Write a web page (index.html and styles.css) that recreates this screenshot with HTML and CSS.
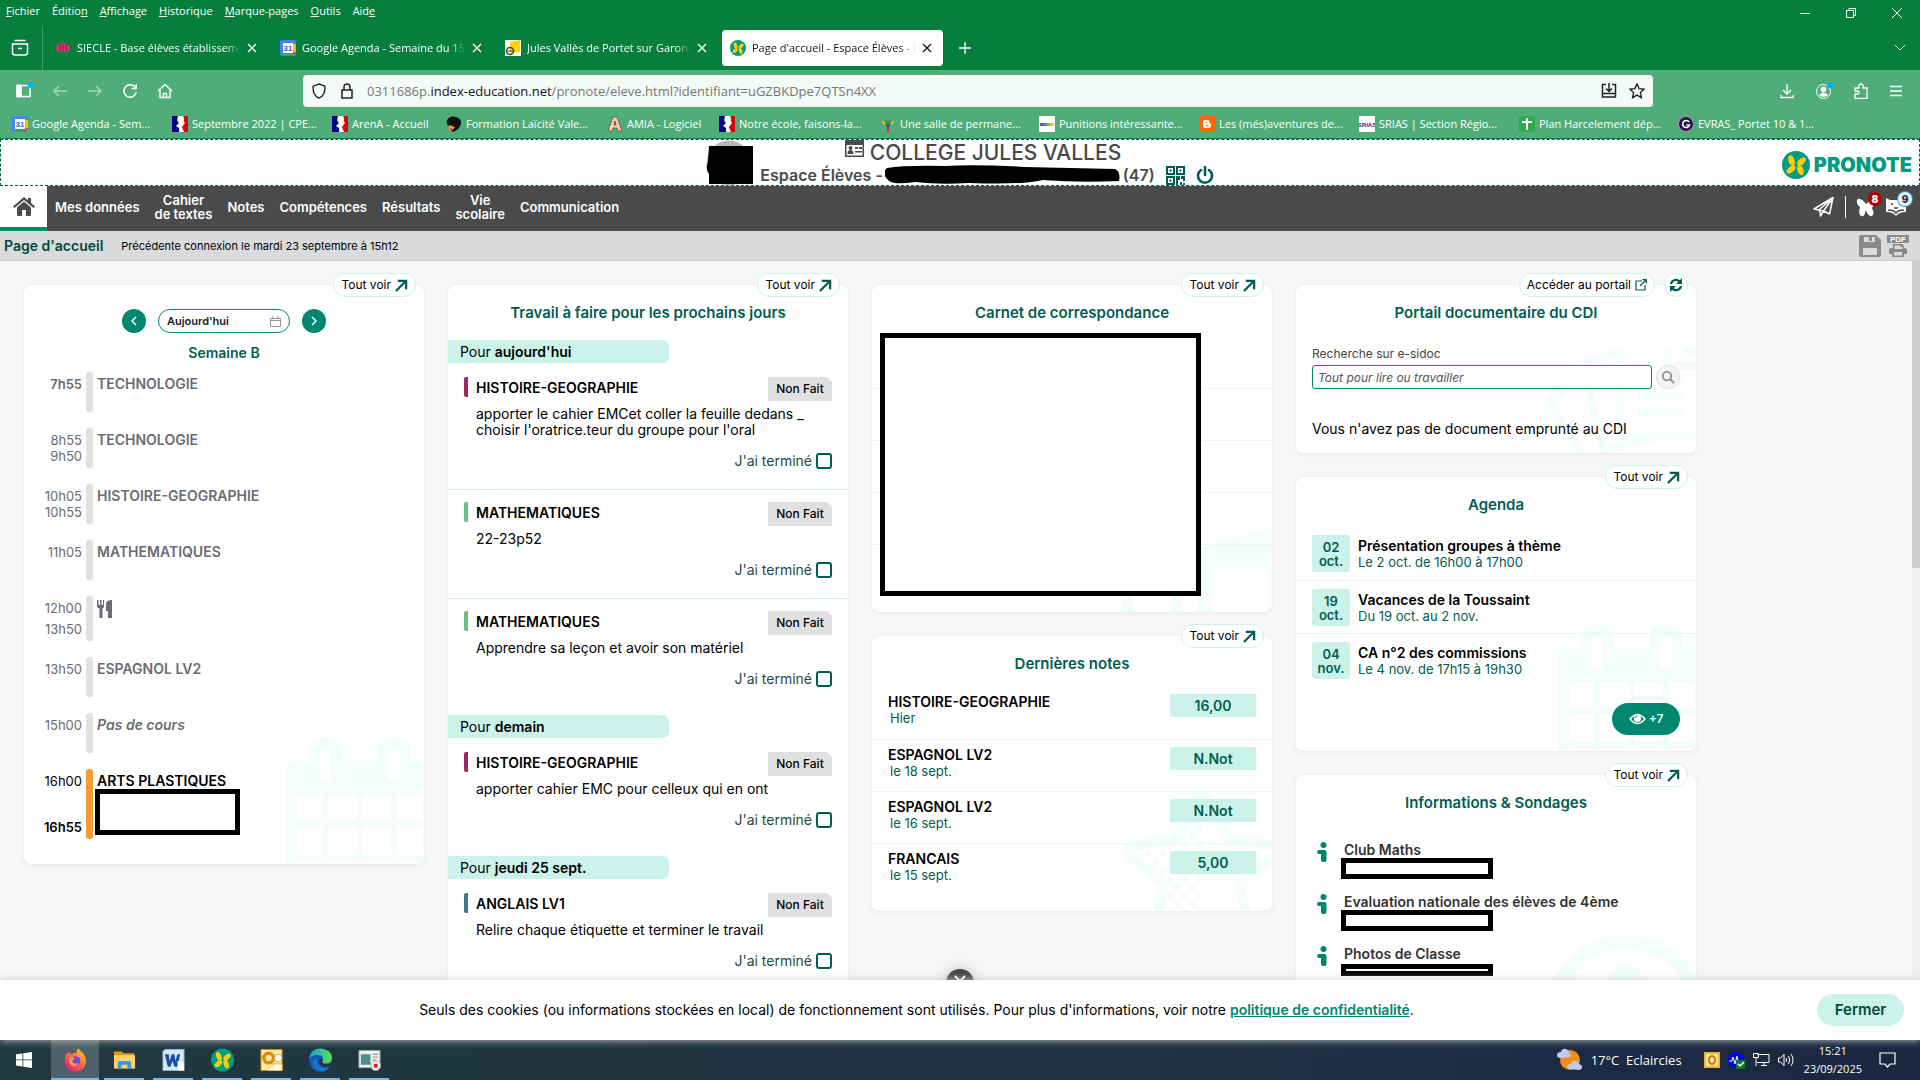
FILE: index.html
```html
<!DOCTYPE html>
<html lang="fr">
<head>
<meta charset="utf-8">
<title>Page d'accueil - Espace Élèves - PRONOTE</title>
<link rel="stylesheet" href="styles.css">
</head>
<body>
<svg class="defs" aria-hidden="true">
  <symbol id="butterfly" viewBox="0 0 28 28"><circle cx="14" cy="14" r="14" fill="#009b80"/><g fill="#ffcd05"><ellipse cx="9.500" cy="9.500" rx="3" ry="5.500" transform="rotate(-18 9.500 9.500)"/><ellipse cx="9" cy="18.500" rx="5.300" ry="3" transform="rotate(-38 9 18.500)"/><ellipse cx="19.500" cy="10.500" rx="5.300" ry="3" transform="rotate(-42 19.500 10.500)"/><ellipse cx="18.500" cy="19" rx="3" ry="5.500" transform="rotate(-18 18.500 19)"/><path d="M9.500 12l3.500 1.500-2.500 4zM18.500 16.500L15.500 15l2-3.500z"/></g></symbol>
  <symbol id="agenda-ico" viewBox="0 0 16 16"><rect width="16" height="16" rx="2" fill="#4285f4"/><path d="M12 4h4v8h-4z" fill="#fbbc04"/><path d="M4 12h8v4H4z" fill="#34a853"/><path d="M12 12h4l-4 4z" fill="#ea4335"/><rect x="3" y="3" width="10" height="10" fill="#fff"/><text x="8" y="11" font-size="8" font-weight="700" text-anchor="middle" fill="#3367d6" font-family="Liberation Sans">31</text></symbol>
  <symbol id="marianne" viewBox="0 0 16 16"><path d="M0 0h16v16H0z" fill="#fff"/><path d="M0 0h6C5 4 5 5 7 7L4 10l3 2v4H0z" fill="#000091"/><path d="M16 0h-5c2 3 0 5 2 7l-3 4 2 5h4z" fill="#e1000f"/></symbol>
  <symbol id="arrow" viewBox="0 0 14 14"><path d="M1 13L11.500 2.500M3 2h9v9" fill="none" stroke="#005e50" stroke-width="2.400"/></symbol>
  <symbol id="cross" viewBox="0 0 10 10"><path d="M1 1l8 8M9 1l-8 8" fill="none" stroke="currentColor" stroke-width="1.300"/></symbol>
  <symbol id="info" viewBox="0 0 10 20"><circle cx="6.500" cy="3" r="3"/><path d="M2 8h5.500q2 0 2 2v8q0 2-2.500 2h-1q-2 0-2-2v-6H2q-2 0-2-2t2-2z"/></symbol>
  <symbol id="calendar-mark" viewBox="0 0 138 126"><path fill="#f3fdfa" fill-rule="evenodd" d="M0 31q0-8 8-8h14V17q0-17 17-17t17 17v6h35V17q0-17 17-17t17 17v6h13v103H0zM34 16v24q0 3 3 3h5q3 0 3-3V16q0-4-3-4h-5q-3 0-3 4zM102 16v24q0 3 3 3h6q3 0 3-3V16q0-4-3-4h-6q-3 0-3 4zM11 57h25v25H11zM42 57h29v25H42zM76 57h29v25H76zM111 57h26v25h-26zM11 89h25v28H11zM42 89h29v28H42zM76 89h29v28H76zM111 89h26v28h-26zM11 123h25v3H11zM42 123h29v3H42zM76 123h29v3H76zM111 123h26v3h-26z"/></symbol>
</svg>

<header class="browser">
  <div class="menubar">
    <nav class="menus" aria-label="Menu du navigateur">
      <a href="#"><u>F</u>ichier</a><a href="#">Éditio<u>n</u></a><a href="#"><u>A</u>ffichage</a><a href="#"><u>H</u>istorique</a><a href="#"><u>M</u>arque-pages</a><a href="#"><u>O</u>utils</a><a href="#">Aid<u>e</u></a>
    </nav>
    <div class="window-controls">
      <button aria-label="Réduire"><svg width="12" height="12" viewBox="0 0 12 12"><path d="M1 6.500h10"/></svg></button>
      <button aria-label="Restaurer"><svg width="12" height="12" viewBox="0 0 12 12"><path d="M1.500 3.500h7v7h-7zM4 3V1.500h6.500v7H9"/></svg></button>
      <button aria-label="Fermer la fenêtre"><svg width="12" height="12" viewBox="0 0 12 12"><path d="M1 1l10 10M11 1L1 11"/></svg></button>
    </div>
  </div>
  <div class="tabs">
    <button class="tab-list" aria-label="Vue d'ensemble"><svg width="18" height="18" viewBox="0 0 18 18"><path d="M3.500 1.500h11M1.500 5h15v8.500q0 2.500-2.500 2.500H4q-2.500 0-2.500-2.500zM7 9.500h4" stroke-width="1.500"/></svg></button>
    <div class="tab"><svg class="fav" viewBox="0 0 16 16"><path d="M2 5q2-2 3 0 1-3 3-2 2-1 3 2 2-2 3 0 2 4-1 8l-2-3-1 3-2-3-2 3-1-3-2 3Q0 9 2 5z" fill="#d8366a"/><path d="M5 5v5M8 4v6M11 5v5" stroke="#7a1a3c" fill="none"/></svg><a href="#">SIECLE - Base élèves établissements</a><button aria-label="Fermer l'onglet"><svg width="10" height="10"><use href="#cross"/></svg></button></div>
    <div class="tab"><svg class="fav"><use href="#agenda-ico"/></svg><a href="#">Google Agenda - Semaine du 15 sept.</a><button aria-label="Fermer l'onglet"><svg width="10" height="10"><use href="#cross"/></svg></button></div>
    <div class="tab"><svg class="fav" viewBox="0 0 16 16"><path d="M0 0h16v16H0z" fill="#fff"/><path d="M5 2l10-2v12L5 13z" fill="#ffd400"/><circle cx="5" cy="11" r="3.500" fill="none" stroke="#3a4a4a" stroke-width="1.500"/><path d="M2 11h6" stroke="#3a4a4a"/></svg><a href="#">Jules Vallès de Portet sur Garonne</a><button aria-label="Fermer l'onglet"><svg width="10" height="10"><use href="#cross"/></svg></button></div>
    <div class="tab active"><svg class="fav"><use href="#butterfly"/></svg><a href="#">Page d'accueil - Espace Élèves - PRONOTE</a><button aria-label="Fermer l'onglet"><svg width="10" height="10"><use href="#cross"/></svg></button></div>
    <button class="new-tab" aria-label="Nouvel onglet"><svg width="12" height="12" viewBox="0 0 12 12"><path d="M6 0v12M0 6h12" stroke-width="1.300"/></svg></button>
    <button class="all-tabs" aria-label="Lister les onglets"><svg width="12" height="12" viewBox="0 0 12 12"><path d="M1 3l5 5 5-5"/></svg></button>
  </div>
  <div class="toolbar">
    <div class="tools left">
      <button aria-label="Panneau latéral"><svg width="18" height="18" viewBox="0 0 18 18"><path d="M2 3.500h13v11H2zM6 3.500v11" stroke-width="1.500"/><path d="M2 3h4v12H2z" fill="#fff"/><circle cx="15.500" cy="3" r="3" fill="#00b3f4" stroke="none"/></svg></button>
      <button class="dim" aria-label="Page précédente"><svg width="16" height="16" viewBox="0 0 16 16"><path d="M15 8H2M7 3L2 8l5 5" stroke-width="1.400"/></svg></button>
      <button class="dim" aria-label="Page suivante"><svg width="16" height="16" viewBox="0 0 16 16"><path d="M1 8h13M9 3l5 5-5 5" stroke-width="1.400"/></svg></button>
      <button aria-label="Actualiser"><svg width="16" height="16" viewBox="0 0 16 16"><path d="M13.500 5A6.200 6.200 0 1 0 14.200 9M14.200 1v4.500H9.700" stroke-width="1.500"/></svg></button>
      <button aria-label="Accueil"><svg width="16" height="16" viewBox="0 0 16 16"><path d="M1 8l7-6.500L15 8M3 7v7.500h10V7M6.500 14.500v-4h3v4" stroke-width="1.400"/></svg></button>
    </div>
    <div class="urlbar">
      <svg width="16" height="16" viewBox="0 0 16 16"><path d="M8 1l6 2.200c0 6-1 9.500-6 12C3 12.700 2 9.200 2 3.200z" stroke-width="1.400"/></svg>
      <svg width="16" height="16" viewBox="0 0 16 16"><path d="M3 7h10v8H3zM5 7V4q0-3 3-3t3 3v3" stroke-width="1.500"/></svg>
      <p class="url">0311686p.<b>index-education.net</b>/pronote/eleve.html?identifiant=uGZBKDpe7QTSn4XX</p>
      <button aria-label="Installer"><svg width="16" height="16" viewBox="0 0 16 16"><path d="M5 1.500H1.500v9h13v-9H11M1.500 10v4h13v-4M8 0v8M5 5.500L8 8.500l3-3" stroke-width="1.500"/></svg></button>
      <button aria-label="Marquer cette page"><svg width="16" height="16" viewBox="0 0 16 16"><path d="M8 1l2.100 4.600 5 .6-3.700 3.400 1 5L8 12.100l-4.400 2.500 1-5L.9 6.200l5-.6z" stroke-width="1.400"/></svg></button>
    </div>
    <div class="tools right">
      <button aria-label="Téléchargements"><svg width="16" height="16" viewBox="0 0 16 16"><path d="M8 1v10M4 7l4 4 4-4M2 12v2.500h12V12" stroke-width="1.300"/></svg></button>
      <button aria-label="Compte"><svg width="18" height="18" viewBox="0 0 18 18"><circle cx="8.500" cy="9.500" r="7"/><circle cx="8.500" cy="7.500" r="2.500" fill="#fff"/><path d="M4.500 13q4-4 8 0-4 3-8 0z" fill="#fff"/><circle cx="15" cy="3" r="3" fill="#00b3f4" stroke="none"/></svg></button>
      <button aria-label="Extensions"><svg width="16" height="16" viewBox="0 0 16 16"><path d="M2 15.300V11h2.500q1.500 0 1.500-1.500T4.500 8H2V5h4V3q0-2 2-2t2 2v2h4v10.300z" stroke-width="1.300"/></svg></button>
      <button aria-label="Menu"><svg width="14" height="14" viewBox="0 0 14 14"><path d="M1 2.500h12M1 7h12M1 11.500h12" stroke-width="1.300"/></svg></button>
    </div>
  </div>
  <nav class="bookmarks" aria-label="Marque-pages">
    <a href="#"><svg><use href="#agenda-ico"/></svg>Google Agenda - Sem...</a>
    <a href="#"><svg><use href="#marianne"/></svg>Septembre 2022 | CPE...</a>
    <a href="#"><svg><use href="#marianne"/></svg>ArenA - Accueil</a>
    <a href="#"><svg viewBox="0 0 16 16"><path d="M1 4q3-5 9-3 6 2 5 7-2 6-8 8-3-1-3-5-4-2-3-7z" fill="#111"/><path d="M3 9l6 2-4 5q-3-2-2-7z" fill="#f2a23c"/><path d="M4 12l3 1-2 3z" fill="#d6246b"/></svg>Formation Laïcité Vale...</a>
    <a href="#"><svg viewBox="0 0 16 16"><path d="M1 15L6 1h4l5 14h-4l-1-3H6l-1 3zM7 9h2L8 5z" fill="#f9cdb4" stroke="#6b4a3a" stroke-width=".8"/></svg>AMIA - Logiciel</a>
    <a href="#"><svg><use href="#marianne"/></svg>Notre école, faisons-la...</a>
    <a href="#"><svg viewBox="0 0 16 16"><path d="M4 6l4 8 4-8z" fill="#6a3fa0"/><path d="M1 5l5 1-1 4zM15 5l-5 1 1 4z" fill="#e8b920"/><path d="M5 3l3 3 3-3-1 6H6z" fill="#2f8f3a"/><path d="M7 12h2v4H7z" fill="#d23"/></svg>Une salle de permane...</a>
    <a href="#"><svg viewBox="0 0 16 16"><path d="M0 0h16v16H0z" fill="#fff"/><path d="M1 7h4v3H1z" fill="#7a4fa8"/><path d="M5 7h3v3H5z" fill="#3a8fd0"/><path d="M8 7h3v3H8z" fill="#8cc63e"/><path d="M11 7h4v3h-4z" fill="#f3c22b"/></svg>Punitions intéressante...</a>
    <a href="#"><svg viewBox="0 0 16 16"><rect width="16" height="16" rx="3" fill="#ff6600"/><path d="M5.500 4h3q2 0 2 2t1.500 2v1.500q0 2.500-2.500 2.500h-3Q4 12 4 9.500v-4Q4 4 5.500 4z" fill="#fff"/><path d="M6.500 6.500H8M6.500 9.500h3" stroke="#ff6600"/></svg>Les (més)aventures de...</a>
    <a href="#"><svg viewBox="0 0 16 16"><path d="M0 0h16v16H0z" fill="#fff"/><text x="8" y="11" font-size="6" font-weight="700" text-anchor="middle" fill="#1c2a78" font-family="Liberation Sans">SRIAS</text></svg>SRIAS | Section Régio...</a>
    <a href="#"><svg viewBox="0 0 16 16"><rect width="16" height="16" rx="2" fill="#2fa84f"/><path d="M8 2v12M3 6h10" stroke="#fff" stroke-width="2"/></svg>Plan Harcelement dép...</a>
    <a href="#"><svg viewBox="0 0 16 16"><circle cx="8" cy="8" r="7.500" fill="#1d1b44" stroke="#d77ec0"/><path d="M11 6a3.500 3.500 0 1 0 .5 3H8.500" fill="none" stroke="#fff" stroke-width="1.600"/></svg>EVRAS_ Portet 10 &amp; 1...</a>
  </nav>
</header>

<section class="banner">
  <div class="identity">
    <svg class="photo" width="48" height="46" viewBox="0 0 48 46"><circle cx="23" cy="23" r="22.500" fill="#b5b5c0"/><path d="M3 6h44v38H3V34Q-1 29 2 22z"/></svg>
    <div class="identity-text">
      <h1><svg width="19" height="17" viewBox="0 0 19 17"><path d="M0 0h19v17H0z" fill="#4a4a4a"/><path d="M1.500 5h16v10.500h-16z" fill="#fff"/><circle cx="5.500" cy="8" r="2" fill="#4a4a4a"/><path d="M2.500 14q0-4 3-4t3 4zM10 7h3v2h-3zM14 7h3v2h-3zM10 11h7v1.500h-7z" fill="#4a4a4a"/></svg>COLLEGE JULES VALLES</h1>
      <p>Espace Élèves -<svg width="236" height="20" viewBox="0 0 236 20"><path d="M2 3Q20 0 60 1q30-2 80 1l90 2q6 3 4 12-40 2-76-1-20 5-74 3-30 2-54-1-20 3-26-1-8-7-2-13z"/></svg>(47)
        <button aria-label="QR code"><svg width="19" height="19" viewBox="0 0 19 19"><path d="M1 1h7v7H1zM11 1h7v7h-7zM1 11h7v7H1z" fill="none" stroke="#005e50" stroke-width="2"/><path d="M3.500 3.500h2v2h-2zM13.500 3.500h2v2h-2zM3.500 13.500h2v2h-2zM10 10h4v4h-2v5h-2zM15 10h4v5h-2v-2h-2zM14 16h2v3h-2zM17 17h2v2h-2z" fill="#005e50"/></svg></button>
        <button aria-label="Se déconnecter"><svg width="18" height="19" viewBox="0 0 18 19"><path d="M5 4a7 7 0 1 0 8 0M9 1v8" fill="none" stroke="#005e50" stroke-width="2.600" stroke-linecap="round"/></svg></button>
      </p>
    </div>
  </div>
  <a class="brand" href="#"><svg width="28" height="28"><use href="#butterfly"/></svg>PRONOTE</a>
</section>

<nav class="mainnav" aria-label="Navigation principale">
  <a class="home" href="#" aria-label="Accueil"><svg width="22" height="19" viewBox="0 0 22 19"><path d="M11 0L0 9.500 1.500 11 11 3l9.500 8L22 9.500l-4-3.400V1h-3v2.500z"/><path d="M11 4.500L4 10.500V18q0 1 1 1h4v-6h4v6h4q1 0 1-1v-7.500z"/></svg></a>
  <a href="#">Mes données</a><a href="#">Cahier<br>de textes</a><a href="#">Notes</a><a href="#">Compétences</a><a href="#">Résultats</a><a href="#">Vie<br>scolaire</a><a href="#">Communication</a>
  <div class="nav-tools">
    <button aria-label="Envoyer"><svg width="22" height="22" viewBox="0 0 22 22"><path d="M1 13L20 1.500 16.500 18l-6-3-3 5-1-6.500L20 1.500 10.500 15z" fill="none" stroke="#fff" stroke-width="1.500" stroke-linejoin="round"/></svg></button>
    <i class="divider"></i>
    <button aria-label="8 notifications"><svg width="20" height="22" viewBox="0 0 20 22"><path d="M10 8C7 4 3 1 1 4q-1 4 3 7-2 7 1 9 3 1 4-3l1-3 1 3q2 4 5 3 3-2 0-8 3-4 2-7-4-2-8 3z" fill="#fff"/></svg><b class="count alert">8</b></button>
    <button aria-label="9 messages"><svg width="20" height="22" viewBox="0 0 20 22"><path d="M0 2l4 2h12l4-2v14q-7 0-10 4-3-4-10-4z" fill="#fff"/><path d="M6 7v2M14 7v2M8 12h4M2 14q6 0 8 3 2-3 8-3" stroke="#4a4a4a" stroke-width="1.600" fill="none"/></svg><b class="count unread">9</b></button>
  </div>
</nav>

<div class="subbar">
  <h2>Page d'accueil</h2>
  <p>Précédente connexion le mardi 23 septembre à 15h12</p>
  <div class="sub-tools">
    <button aria-label="Enregistrer"><svg width="22" height="22" viewBox="0 0 22 22"><path fill="#8a8a8a" fill-rule="evenodd" d="M0 2q0-2 2-2h15l5 5v15q0 2-2 2H2q-2 0-2-2zM5 2v5h11V2h-3v4h-3V2zM4 13v7h14v-7z"/></svg></button>
    <button aria-label="Imprimer en PDF"><svg width="22" height="22" viewBox="0 0 22 22"><path d="M0 0h22v8H0z" fill="#8a8a8a"/><text x="11" y="7" font-size="8" font-weight="700" text-anchor="middle" fill="#fff" font-family="Liberation Sans">PDF</text><path fill="#8a8a8a" fill-rule="evenodd" d="M6 13V9h9l2 2v2h1q2 0 2 2v4h-3v3H5v-3H2v-4q0-2 2-2zM7.500 10.500V14h8v-2h-2v-1.500zM7 17v3.500h8V17z"/></svg></button>
  </div>
</div>

<main class="viewport">
  <div class="dashboard">
    <div class="column">
      <section class="card timetable">
        <svg class="mark" width="138" height="126"><use href="#calendar-mark"/></svg>
        <div class="pills"><a class="pill" href="#">Tout voir <svg width="13" height="13"><use href="#arrow"/></svg></a></div>
        <div class="day-picker">
          <button class="round" aria-label="Jour précédent"><svg width="10" height="10" viewBox="0 0 10 10"><path d="M7 1L3 5l4 4"/></svg></button>
          <button class="date">Aujourd'hui <svg width="11" height="11" viewBox="0 0 11 11"><path d="M.5 2.500h10v8H.5zM.5 4.500h10M3 0v3M8 0v3" fill="none" stroke="#9a9494"/></svg></button>
          <button class="round" aria-label="Jour suivant"><svg width="10" height="10" viewBox="0 0 10 10"><path d="M3 1l4 4-4 4"/></svg></button>
        </div>
        <h3>Semaine B</h3>
        <ol class="slots">
          <li><div class="hours"><b>7h55</b></div><i></i><strong>TECHNOLOGIE</strong></li>
          <li><div class="hours">8h55<br>9h50</div><i></i><strong>TECHNOLOGIE</strong></li>
          <li><div class="hours">10h05<br>10h55</div><i></i><strong>HISTOIRE-GEOGRAPHIE</strong></li>
          <li><div class="hours">11h05</div><i></i><strong>MATHEMATIQUES</strong></li>
          <li class="meal"><div class="hours"><span>12h00</span><span>13h50</span></div><i></i><svg width="16" height="19" viewBox="0 0 16 19"><path d="M0 0h1.500v5H3V0h1.500v5H6V0h1v6q0 2-1.500 2.500V18h-3V8.500Q0 8 0 6zM9 3q1-3 6-3v18h-4v-7H9z"/></svg></li>
          <li><div class="hours">13h50</div><i></i><strong>ESPAGNOL LV2</strong></li>
          <li><div class="hours">15h00</div><i></i><em>Pas de cours</em></li>
          <li class="current"><div class="hours"><span>16h00</span><b>16h55</b></div><i></i><div><strong>ARTS PLASTIQUES</strong><div class="redacted teacher"></div></div></li>
        </ol>
      </section>
    </div>

    <div class="column">
      <section class="card homework">
        <div class="pills"><a class="pill" href="#">Tout voir <svg width="13" height="13"><use href="#arrow"/></svg></a></div>
        <h3>Travail à faire pour les prochains jours</h3>
        <h4>Pour <b>aujourd'hui</b></h4>
        <article class="plum"><header><strong>HISTOIRE-GEOGRAPHIE</strong><span class="state">Non Fait</span></header><p>apporter le cahier EMCet coller la feuille dedans _<br>choisir l'oratrice.teur du groupe pour l'oral</p><label>J'ai terminé <input type="checkbox"></label></article>
        <article class="green"><header><strong>MATHEMATIQUES</strong><span class="state">Non Fait</span></header><p>22-23p52</p><label>J'ai terminé <input type="checkbox"></label></article>
        <article class="green"><header><strong>MATHEMATIQUES</strong><span class="state">Non Fait</span></header><p>Apprendre sa leçon et avoir son matériel</p><label>J'ai terminé <input type="checkbox"></label></article>
        <h4>Pour <b>demain</b></h4>
        <article class="plum"><header><strong>HISTOIRE-GEOGRAPHIE</strong><span class="state">Non Fait</span></header><p>apporter cahier EMC pour celleux qui en ont</p><label>J'ai terminé <input type="checkbox"></label></article>
        <h4>Pour <b>jeudi 25 sept.</b></h4>
        <article class="steel"><header><strong>ANGLAIS LV1</strong><span class="state">Non Fait</span></header><p>Relire chaque étiquette et terminer le travail</p><label>J'ai terminé <input type="checkbox"></label></article>
      </section>
    </div>

    <div class="column">
      <section class="card notebook">
        <svg class="mark" width="150" height="84" viewBox="0 0 150 84"><path fill="#f3fdfa" fill-rule="evenodd" d="M0 40L79 20 150 0v84h-4V41H90v43H75V60H60v24H50V60H11v24H0z"/></svg>
        <div class="pills"><a class="pill" href="#">Tout voir <svg width="13" height="13"><use href="#arrow"/></svg></a></div>
        <h3>Carnet de correspondance</h3>
        <div class="rules"><i></i><i></i><i></i><i></i></div>
        <div class="redacted entries"></div>
      </section>
      <section class="card grades">
        <svg class="mark" width="150" height="121" viewBox="0 0 150 121"><defs><pattern id="dots" width="15" height="17" patternUnits="userSpaceOnUse"><circle cx="3.500" cy="4" r="3.200" fill="#f3fdfa"/><circle cx="11" cy="12.500" r="3.200" fill="#f3fdfa"/></pattern></defs><path d="M80 10v111H38l7-27-33-30 45-9z" fill="url(#dots)"/><path d="M35 125l7-31L7 65q-4-9 7-10l40-5L73 10q7-8 13 0l20 40 46 5M124 125l-6-30 32-30" fill="none" stroke="#f3fdfa" stroke-width="10"/></svg>
        <div class="pills"><a class="pill" href="#">Tout voir <svg width="13" height="13"><use href="#arrow"/></svg></a></div>
        <h3>Dernières notes</h3>
        <ul>
          <li><div><strong>HISTOIRE-GEOGRAPHIE</strong><small>Hier</small></div><b>16,00</b></li>
          <li><div><strong>ESPAGNOL LV2</strong><small>le 18 sept.</small></div><b>N.Not</b></li>
          <li><div><strong>ESPAGNOL LV2</strong><small>le 16 sept.</small></div><b>N.Not</b></li>
          <li><div><strong>FRANCAIS</strong><small>le 15 sept.</small></div><b>5,00</b></li>
        </ul>
      </section>
    </div>

    <div class="column">
      <section class="card library">
        <svg class="mark" width="150" height="105" viewBox="0 0 150 105"><path d="M32 30L4 54l32 51M34 16l40-12v84M34 14l24 88 60-16M76 88h74M122 0v18h28M140 0l10 8M112 33h26M92 49h46M92 64h46" fill="none" stroke="#f3fdfa" stroke-width="8"/></svg>
        <div class="pills"><a class="pill" href="#">Accéder au portail <svg width="12" height="12" viewBox="0 0 12 12"><path d="M7 2H1v9h9V6M5 7l6-6M7.500.7H11.300V4.500" fill="none" stroke="#005e50" stroke-width="1.200"/></svg></a><button class="pill refresh" aria-label="Actualiser"><svg width="14" height="14" viewBox="0 0 14 14"><path d="M2 6a5 5 0 0 1 9-2M12 8a5 5 0 0 1-9 2" fill="none" stroke="#005e50" stroke-width="2.200"/><path d="M13 0v6H7zM1 14V8h6z" fill="#005e50"/></svg></button></div>
        <h3>Portail documentaire du CDI</h3>
        <label for="esidoc">Recherche sur e-sidoc</label>
        <div class="search"><input id="esidoc" type="text" placeholder="Tout pour lire ou travailler"><button aria-label="Rechercher"><svg width="14" height="14" viewBox="0 0 14 14"><circle cx="6" cy="6" r="4.200" fill="none" stroke="#999" stroke-width="2"/><path d="M9 9l4 4" stroke="#999" stroke-width="2.400"/></svg></button></div>
        <p>Vous n'avez pas de document emprunté au CDI</p>
      </section>
      <section class="card agenda">
        <svg class="mark" width="138" height="126"><use href="#calendar-mark"/></svg>
        <div class="pills"><a class="pill" href="#">Tout voir <svg width="13" height="13"><use href="#arrow"/></svg></a></div>
        <h3>Agenda</h3>
        <ul>
          <li><time>02<br>oct.</time><div><strong>Présentation groupes à thème</strong><small>Le 2 oct. de 16h00 à 17h00</small></div></li>
          <li><time>19<br>oct.</time><div><strong>Vacances de la Toussaint</strong><small>Du 19 oct. au 2 nov.</small></div></li>
          <li><time>04<br>nov.</time><div><strong>CA n°2 des commissions</strong><small>Le 4 nov. de 17h15 à 19h30</small></div></li>
        </ul>
        <button class="more"><svg width="17" height="12" viewBox="0 0 17 12"><path d="M1 6q7.500-9 15 0-7.500 9-15 0z" fill="none" stroke="#fff" stroke-width="1.500"/><circle cx="8.500" cy="5.500" r="3.600" fill="#fff"/><path d="M6.500 5q0-2 2-2" fill="none" stroke="#00876f"/></svg>+7</button>
      </section>
      <section class="card news">
        <svg class="mark news-mark" width="150" height="150" viewBox="0 0 150 150"><circle cx="80" cy="80" r="73" fill="none" stroke="#f3fdfa" stroke-width="14"/><circle cx="80" cy="45" r="16" fill="#f3fdfa"/></svg>
        <div class="pills"><a class="pill" href="#">Tout voir <svg width="13" height="13"><use href="#arrow"/></svg></a></div>
        <h3>Informations &amp; Sondages</h3>
        <ul>
          <li><svg width="10" height="20"><use href="#info"/></svg><div><strong>Club Maths</strong><div class="redacted author"></div></div></li>
          <li><svg width="10" height="20"><use href="#info"/></svg><div><strong>Evaluation nationale des élèves de 4ème</strong><div class="redacted author"></div></div></li>
          <li><svg width="10" height="20"><use href="#info"/></svg><div><strong>Photos de Classe</strong><div class="redacted author thin"></div></div></li>
        </ul>
      </section>
    </div>
  </div>
  <div class="scrollbar"><i></i></div>
  <button class="scroll-down" aria-label="Défiler vers le bas"><svg width="14" height="16" viewBox="0 0 14 16"><path d="M2 1l5 5 5-5M2 8l5 5 5-5" fill="none" stroke="#fff" stroke-width="2"/></svg></button>
</main>

<footer class="cookies">
  <p>Seuls des cookies (ou informations stockées en local) de fonctionnement sont utilisés. Pour plus d'informations, voir notre <a href="#">politique de confidentialité</a>.</p>
  <button>Fermer</button>
</footer>

<div class="taskbar">
  <button class="start" aria-label="Démarrer"><svg width="16" height="16" viewBox="0 0 16 16"><path d="M0 2.300L6.500 1.400v6.100H0zM7.300 1.300L16 0v7.500H7.300zM0 8.300h6.500v6.200L0 13.600zM7.300 8.300H16V16l-8.700-1.300z" fill="#fff"/></svg></button>
  <button class="app focused" aria-label="Firefox"><svg viewBox="0 0 24 24"><defs><linearGradient id="fx" x1="1" y1="0" x2="0.200" y2="1"><stop offset="0" stop-color="#ffe226"/><stop offset=".5" stop-color="#ff7139"/><stop offset="1" stop-color="#e31587"/></linearGradient></defs><path d="M2 6l3-2 3 2q2-2 5-1 0-4 2-5 2 3 5 5 3 4 3 9-1 9-11 10Q2 23 1 14q-1-4 1-8z" fill="url(#fx)"/><circle cx="12" cy="13" r="5" fill="#7542e5"/><path d="M5 9q4-1 7 2-4 0-3 3 2 3 6 1-2 5-7 3-4-3-3-9z" fill="#ff9640"/></svg></button>
  <button class="app" aria-label="Explorateur"><svg viewBox="0 0 24 24"><path d="M1 3h8l2 2h11v4H1z" fill="#d99c1e"/><path d="M1 7h22v14H1z" fill="#ffd367"/><path d="M5 21v-6q0-2 2-2h10q2 0 2 2v6h-4v-4H9v4z" fill="#3b99e0"/></svg></button>
  <button class="app" aria-label="Word"><svg viewBox="0 0 24 24"><path d="M3 1h20v22H1V3z" fill="#d8e8f8" stroke="#8fb4dc"/><path d="M3 6h4l1 7 2-7h3l1 7 2-7h3l-3 13h-3l-2-6-2 6H6z" fill="#1c4f9e"/><path d="M16 13l7 2v8h-6z" fill="#fff"/></svg></button>
  <button class="app" aria-label="Pronote"><svg><use href="#butterfly"/></svg></button>
  <button class="app" aria-label="Outlook"><svg viewBox="0 0 24 24"><path d="M1 1h22v22H1z" fill="#ffe9a8" stroke="#c98d10"/><circle cx="9" cy="10" r="5" fill="none" stroke="#e08a00" stroke-width="3.500"/><circle cx="19" cy="10" r="4" fill="#fff" stroke="#d9a441"/><path d="M8 22l6-6h9v7H8z" fill="#fff7df" stroke="#e8b64a"/></svg></button>
  <button class="app" aria-label="Edge"><svg viewBox="0 0 24 24"><defs><linearGradient id="edge"><stop offset="0" stop-color="#1b9de2"/><stop offset="1" stop-color="#5fe04c"/></linearGradient></defs><circle cx="12" cy="12" r="12" fill="#0f5cb5"/><path d="M0 11Q1 0 12 0q11 1 12 9 0 6-6 7-5 0-4-3 2-6-4-6Q3 6 0 11z" fill="url(#edge)"/><path d="M9 10q-3 8 5 10 5 1 8-2-3 6-9 6-8-1-9-8 0-5 5-6z" fill="#1477cf"/><path d="M14 13q-1 3 4 3 3 0 4-1l1 2q-4 4-9 2-5-3-3-8 3-1 3 2z" fill="#22313a"/></svg></button>
  <button class="app" aria-label="Enregistreur"><svg viewBox="0 0 24 24"><path d="M1 2h22v18H1z" fill="#eef0f2" stroke="#9aa"/><path d="M3 6h10v11H3z" fill="#4c8f86"/><path d="M15 6h6M15 9h6M15 12h4" stroke="#888"/><circle cx="18.500" cy="18" r="5" fill="#f4f4f4" stroke="#aaa"/><path d="M16.500 16h4v4h-4z" fill="#d4232b"/></svg></button>
  <div class="tray">
    <svg width="26" height="24" viewBox="0 0 26 24"><circle cx="13" cy="12" r="10" fill="#f28c1c"/><path d="M3 10q-3 0-3-3t4-3q1-4 5-3 3 1 3 4 3 1 1 4zM12 21q-3-1-1-4 1-1 3-1 1-4 5-3 3 1 3 3 4 1 3 4-1 2-3 2z" fill="#b9cdf2"/></svg>
    <span class="weather">17°C&nbsp; Eclaircies</span>
    <svg width="16" height="16" viewBox="0 0 16 16"><path d="M0 0h16v16H0z" fill="#f2b62b"/><path d="M2 2h12v12H2z" fill="#ffe7a0"/><ellipse cx="8" cy="8" rx="3" ry="4" fill="none" stroke="#cf7a00" stroke-width="2"/></svg>
    <svg width="17" height="17" viewBox="0 0 17 17"><circle cx="8" cy="8" r="8" fill="#0000ee"/><path d="M1 9h3l1-4 2 7 2-8 1 5" fill="none" stroke="#ffd"/><path d="M8 8h9v9H8z" fill="#0a7a2a"/><path d="M10 12l2 2 4-4" fill="none" stroke="#fff" stroke-width="1.500"/></svg>
    <svg width="17" height="16" viewBox="0 0 17 16"><path d="M4 2.500h12v8H4M8 13.500h6M11 11v3M.5 1.500h5v4h-5zM3 6v8" fill="none" stroke="#fff"/></svg>
    <svg width="17" height="14" viewBox="0 0 17 14"><path d="M.5 5h2L6 1.500v11L2.500 9h-2zM8 5q1 2 0 4M10.500 3q2.500 4 0 8M13 1q4 6 0 12" fill="none" stroke="#fff"/></svg>
    <time>15:21<br>23/09/2025</time>
    <svg width="18" height="16" viewBox="0 0 18 16"><path d="M1 1h15v11h-5l-2.500 3L6 12H1z" fill="none" stroke="#fff" stroke-width="1.200"/></svg>
  </div>
</div>
</body>
</html>
```
FILE: styles.css
```css
* { box-sizing: border-box; margin: 0; padding: 0; }
ul, ol { list-style: none; }
a { color: inherit; text-decoration: none; }
button { border: 0; background: none; color: inherit; font: inherit; }
svg { display: block; flex: none; }
.defs { position: absolute; width: 0; height: 0; }

body {
  height: 100vh;
  display: flex;
  flex-direction: column;
  overflow: hidden;
  background: #f7f7f7;
  color: #000;
  font: 14px/16px Inter, sans-serif;
}

/* Browser chrome */
.browser { background: #067e3c; color: #fff; font: 11px/16px "Open Sans", sans-serif; }
.browser button svg, .urlbar svg { fill: none; stroke: currentColor; }
.menubar { display: flex; justify-content: space-between; height: 26px; }
.menus { display: flex; gap: 12px; padding: 3px 6px; }
.window-controls { display: flex; align-items: center; gap: 34px; padding-right: 17px; }
.tabs { display: flex; align-items: center; height: 44px; padding-right: 14px; }
.tab-list { width: 43px; height: 44px; padding-left: 11px; border-right: 1px solid #3a9a63; }
.tab { display: flex; align-items: center; gap: 6px; width: 221px; height: 36px; margin-left: 4px; padding: 0 11px 0 8px; border-radius: 4px; }
.tab .fav { width: 16px; height: 16px; }
.tab a { flex: 1; overflow: hidden; white-space: nowrap; -webkit-mask-image: linear-gradient(90deg, #000 90%, transparent); mask-image: linear-gradient(90deg, #000 90%, transparent); }
.tab.active { background: #fff; color: #15141a; }
.new-tab { margin-left: 16px; }
.all-tabs { margin-left: auto; }
.toolbar { display: flex; align-items: center; height: 42px; background: #4fad79; }
.tools { display: flex; align-items: center; }
.tools.left { gap: 19px; width: 303px; padding-left: 15px; }
.tools.right { gap: 20px; width: 267px; justify-content: flex-end; padding-right: 17px; }
.dim { opacity: .5; }
.urlbar { flex: 1; display: flex; align-items: center; gap: 12px; height: 32px; padding: 0 8px; border-radius: 4px; background: #f3fbf7; color: #222; }
.url { flex: 1; font-size: 13px; color: #777; }
.url b { font-weight: 400; color: #15141a; }
.bookmarks { display: grid; grid-template-columns: 160px 160px 114px 161px 112px 161px 159px 160px 160px 160px 159px 160px; height: 27px; padding: 4px 0 0 12px; background: #4fad79; border-bottom: 1px solid #067e3c; }
.bookmarks a { display: flex; gap: 4px; white-space: nowrap; }
.bookmarks svg { width: 16px; height: 16px; }

/* School header */
.banner { position: relative; display: flex; justify-content: center; height: 47px; border: 1px dashed #005e50; background: #fff; color: #4a4a4a; }
.identity { display: flex; gap: 6px; }
.identity-text { text-align: center; white-space: nowrap; }
.identity h1 { display: flex; justify-content: center; align-items: flex-start; gap: 6px; padding-right: 8px; font-size: 21px; line-height: 25px; font-weight: 500; }
.identity p { display: flex; align-items: center; gap: 2px; font-size: 16px; line-height: 20px; font-weight: 600; }
.identity p button { margin-left: 9px; }
.brand { position: absolute; right: 7px; top: 11px; display: flex; align-items: center; gap: 4px; color: #009b80; font-size: 20px; line-height: 28px; font-weight: 900; }

.mainnav { display: flex; align-items: center; gap: 15px; height: 45px; padding: 0 14px 4px 0; background: #4a4a4a; color: #fff; font-size: 13px; font-weight: 600; line-height: 14px; text-align: center; }
.home { align-self: stretch; display: flex; align-items: center; justify-content: center; width: 47px; margin: 0 -7px -4px 0; border-bottom: 4px solid #00876f; background: #fff; fill: #4a4a4a; }
.nav-tools { display: flex; align-items: center; gap: 10px; margin-left: auto; }
.nav-tools button { position: relative; }
.divider { width: 1px; height: 22px; background: #fff; }
.count { position: absolute; right: -6px; top: -4px; width: 14px; height: 14px; border-radius: 7px; font-size: 10px; line-height: 14px; }
.alert { background: #b00000; }
.unread { background: #e4f4fc; color: #333; box-shadow: 0 0 0 1px #3b95bd; }

.subbar { display: flex; align-items: center; gap: 18px; height: 30px; padding: 0 11px 0 4px; border-bottom: 1px solid #d0d0d0; background: #dadbdc; font-size: 11px; }
.subbar h2 { font-size: 14px; font-weight: 600; color: #004a40; }
.sub-tools { display: flex; gap: 6px; margin-left: auto; }

/* Dashboard */
.viewport { position: relative; flex: 1; min-height: 0; display: flex; overflow: hidden; }
.dashboard { flex: 1; display: grid; grid-template-columns: repeat(4, minmax(0, 1fr)); gap: 24px; padding: 24px 216px 0 24px; align-items: start; }
.column { display: grid; gap: 24px; }
.scrollbar { width: 8px; background: #f0f0f0; }
.scrollbar i { display: block; height: 307px; background: #cdcdcd; }
.scroll-down { position: absolute; left: 50%; bottom: -17px; width: 28px; height: 28px; margin-left: -14px; padding: 4px 7px; border-radius: 14px; background: #444; box-shadow: 0 0 14px #bbb; }

.card { position: relative; padding-top: 18px; border-radius: 8px; background: #fff; box-shadow: 0 1px 4px #e6e6e6; }
.card > * { position: relative; }
.card > .mark { position: absolute; right: 0; bottom: 0; border-bottom-right-radius: 8px; }
.card > .pills { position: absolute; right: 8px; top: -12px; display: flex; gap: 9px; }
.pill { display: flex; align-items: center; gap: 4px; height: 24px; padding: 0 7px; border: 1px solid #ccf3ea; border-radius: 12px; background: #fff; font-size: 12px; }
.pill.refresh { width: 24px; padding: 0 4px; }
h3 { font-size: 15px; line-height: 20px; font-weight: 600; color: #005e50; text-align: center; }
strong, .card b { font-weight: 600; }
small { display: block; font-size: 13px; color: #005e50; }
.redacted { border: 5px solid #000; background: #fff; }

.timetable { padding: 24px 0 25px; }
.timetable h3 { font-size: 14px; }
.day-picker { display: flex; justify-content: center; gap: 12px; margin-bottom: 10px; }
.round { display: flex; align-items: center; justify-content: center; width: 24px; height: 24px; border-radius: 12px; background: #00876f; }
.round svg { fill: none; stroke: #fff; stroke-width: 1.500; }
.date { display: flex; align-items: center; justify-content: space-between; width: 132px; height: 24px; padding: 0 8px; border: 1px solid #00876f; border-radius: 12px; font-size: 11px; font-weight: 600; color: #222; }
.slots { display: grid; gap: 16px; margin-top: 9px; padding-left: 8px; }
.slots li { display: flex; gap: 4px; min-height: 40px; color: #6b6b73; }
.slots i { width: 7px; border-radius: 3px; background: #e1e1e1; }
.hours { width: 50px; padding-top: 4px; font-size: 13px; text-align: right; }
.slots strong, .slots em, .slots svg { display: block; margin-top: 4px; font-weight: 600; fill: #6b6b73; }
.slots .meal { min-height: 45px; }
.meal .hours, .current .hours { display: flex; flex-direction: column; justify-content: space-between; padding-bottom: 4px; }
.slots .current { min-height: 70px; color: #000; }
.slots .current i { background: #f79a35; }
.teacher { width: 145px; height: 46px; margin-left: -2px; }

.homework { padding-bottom: 40px; }
.homework h3 { margin-bottom: 17px; }
.homework h4 { width: 221px; height: 23px; margin-bottom: 2px; padding-left: 12px; border-radius: 0 6px 6px 0; background: #ccf3ea; font-weight: 400; line-height: 24px; }
.homework article + h4 { margin-top: 8px; }
.homework article { padding: 12px 16px 20px; }
.homework article + article { border-top: 1px solid #ccf3ea; }
.homework header { display: flex; justify-content: space-between; height: 24px; }
.homework header strong { height: 20px; padding-left: 8px; border-left: 4px solid; border-radius: 2px; line-height: 21px; }
.homework .plum strong { border-left-color: #9e2a63; }
.homework .green strong { border-left-color: #6abf83; }
.homework .steel strong { border-left-color: #41788e; }
.state { width: 64px; background: #e0e0e0; clip-path: polygon(0 0, 59px 0, 100% 5px, 100% 100%, 0 100%); font-size: 12px; font-weight: 500; line-height: 24px; text-align: center; }
.homework p { margin: 5px 0 15px; padding-left: 12px; }
.homework label { display: flex; justify-content: flex-end; gap: 4px; color: #1f4a43; }
.homework input { appearance: none; width: 16px; height: 16px; border: 2px solid #005e50; border-radius: 3px; background: #fff; }

.notebook .rules { display: grid; grid-auto-rows: 52px; padding: 14px 0 67px; }
.rules i { border-bottom: 1px solid #e5f9f5; }
.card > .entries { position: absolute; left: 8px; right: 71px; top: 48px; bottom: 16px; }

.grades { padding-bottom: 16px; }
.grades ul { margin-top: 13px; }
.grades li { display: flex; justify-content: space-between; align-items: flex-start; height: 52px; padding: 7px 16px 0; }
.grades li + li { border-top: 1px solid #e5f9f5; }
.grades small { padding-left: 2px; }
.grades li b { width: 86px; background: #ccf3ea; color: #005e50; line-height: 23px; text-align: center; }

.library { padding-bottom: 16px; }
.library label { display: block; margin: 23px 16px 3px; font-size: 12px; color: #444; line-height: 16px; }
.search { display: flex; gap: 4px; padding: 0 16px; }
.search input { flex: 1; min-width: 0; height: 24px; padding: 0 5px; border: 1px solid #00876f; border-radius: 3px; background: #fff; font: italic 12px/16px Inter, sans-serif; }
.search input::placeholder { color: #555; }
.search button { width: 24px; height: 24px; padding: 4px; border: 1px solid #e0e0e0; border-radius: 12px; background: #f4f4f4; }
.library p { margin: 32px 16px 0; }

.agenda ul { margin-top: 12px; }
.agenda li { display: flex; gap: 8px; height: 53px; padding: 8px 16px 7px; }
.agenda li + li { border-top: 1px solid #e5f9f5; }
.agenda time { width: 38px; height: 37px; padding-top: 5px; border-radius: 3px; background: #ccf3ea; color: #005e50; font-size: 13px; font-weight: 600; line-height: 14px; text-align: center; }
.agenda li div { padding-top: 3px; }
.agenda .more { display: flex; align-items: center; justify-content: center; gap: 3px; width: 68px; height: 32px; margin: 17px 16px 16px auto; border-radius: 16px; background: #00876f; color: #fff; font-size: 12px; font-weight: 600; }

.news { height: 260px; }
.card > .news-mark { bottom: -50px; }
.news ul { margin-top: 24px; }
.news li { display: flex; gap: 17px; height: 52px; padding: 5px 21px 0; color: #333; fill: #00876f; }
.author { width: 152px; height: 21px; margin-left: -3px; }
.author.thin { height: 12px; margin-top: 2px; }

/* Cookie notice */
.cookies { position: relative; display: flex; align-items: center; height: 60px; padding: 0 16px; background: #fff; box-shadow: 0 0 8px #ccc; }
.cookies p { flex: 1; text-align: center; }
.cookies a { color: #00876f; font-weight: 600; text-decoration: underline; }
.cookies button { width: 87px; height: 32px; border-radius: 16px; background: #ccf3ea; color: #004a40; font-size: 15px; font-weight: 600; }

/* Taskbar */
.taskbar { display: flex; gap: 9px; height: 40px; background: linear-gradient(90deg, #213840, #1f3340 60%, #1b2b43 80%, #1a2740); color: #fff; font: 13px/18px "Open Sans", sans-serif; }
.start { width: 46px; padding-left: 16px; }
.app { display: flex; justify-content: center; width: 40px; padding-top: 8px; border-bottom: 2px solid #76b9ed; }
.app svg { width: 23px; height: 24px; }
.focused { width: 48px; margin: 0 -4px; background: #4f626a; }
.tray { display: flex; align-items: center; gap: 8px; margin-left: auto; padding-right: 23px; }
.weather { margin-right: 14px; }
.tray time { margin: 0 9px 0 1px; font-size: 11px; text-align: center; }
```
